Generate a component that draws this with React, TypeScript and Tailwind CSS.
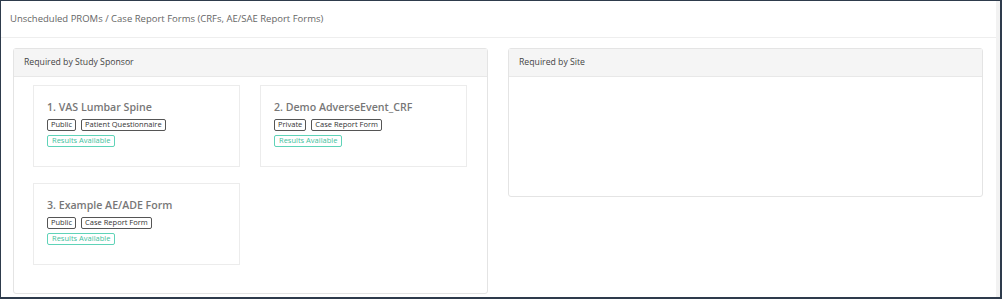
const forms = [
  { n: 1, title: "VAS Lumbar Spine", access: "Public", kind: "Patient Questionnaire" },
  { n: 2, title: "Demo AdverseEvent_CRF", access: "Private", kind: "Case Report Form" },
  { n: 3, title: "Example AE/ADE Form", access: "Public", kind: "Case Report Form" },
];

function Tag({ children }: { children: React.ReactNode }) {
  return (
    <span className="inline-flex items-center h-[12px] px-[3px] border border-[#555] rounded-[2px] text-[7.5px] leading-none text-[#333]">
      {children}
    </span>
  );
}

function FormCard({ n, title, access, kind }: { n: number; title: string; access: string; kind: string }) {
  return (
    <div className="w-[207px] h-[82px] border border-[#ececec] bg-white pl-[13px] pt-[14px] flex flex-col">
      <div className="text-[10.6px] leading-[14px] font-semibold text-[#777]">
        {n}. {title}
      </div>
      <div className="flex gap-[5px] mt-[5px]">
        <Tag>{access}</Tag>
        <Tag>{kind}</Tag>
      </div>
      <div className="flex mt-[4px]">
        <span className="inline-flex items-center h-[12px] px-[4px] border border-[#5fd3b8] rounded-[2px] text-[7.5px] leading-none text-[#3fbf9e]">
          Results Available
        </span>
      </div>
    </div>
  );
}

function Panel({ title, children, className }: { title: string; children?: React.ReactNode; className?: string }) {
  return (
    <div className={`w-[475px] border border-[#e4e4e4] rounded-[3px] bg-white flex flex-col ${className ?? ""}`}>
      <div className="h-[28px] bg-[#f5f5f5] border-b border-[#e8e8e8] flex items-center px-[10px] text-[8.7px] text-[#444]">
        {title}
      </div>
      {children}
    </div>
  );
}

export default function App() {
  return (
    <div
      className="w-[1002px] h-[299px] flex bg-white border-t border-l border-r-2 border-b-2 border-[#2e3b4c] overflow-hidden"
      style={{ fontFamily: "'Open Sans', sans-serif" }}
    >
      <div className="flex-1 flex flex-col">
        <div className="h-[37px] border-b border-[#eeeeee] flex items-center px-[9px] text-[9.5px] text-[#666]">
          Unscheduled PROMs / Case Report Forms (CRFs, AE/SAE Report Forms)
        </div>
        <div className="flex gap-[20px] pl-[12px] pt-[10px]">
          <Panel title="Required by Study Sponsor" className="h-[246px]">
            <div className="grid grid-cols-[207px_207px] gap-x-[20px] gap-y-[16px] pl-[19px] pt-[8px]">
              {forms.map((f) => (
                <FormCard key={f.n} {...f} />
              ))}
            </div>
          </Panel>
          <Panel title="Required by Site" className="h-[149px]" />
        </div>
      </div>
      <div className="w-[4px] bg-[#f2f2f2]" />
    </div>
  );
}
